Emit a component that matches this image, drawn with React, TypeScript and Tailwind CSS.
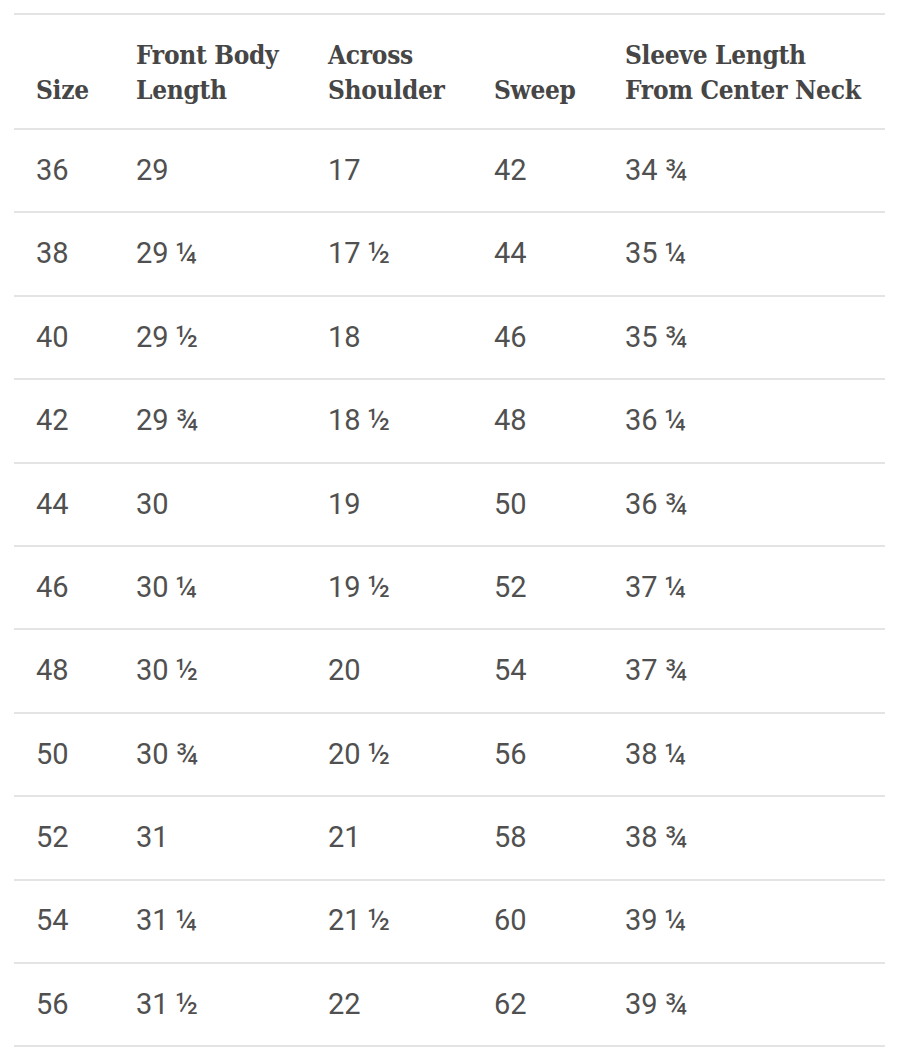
const headers = [
  ["Size"],
  ["Front Body", "Length"],
  ["Across", "Shoulder"],
  ["Sweep"],
  ["Sleeve Length", "From Center Neck"],
];

const rows = [
  ["36", "29", "17", "42", "34 ¾"],
  ["38", "29 ¼", "17 ½", "44", "35 ¼"],
  ["40", "29 ½", "18", "46", "35 ¾"],
  ["42", "29 ¾", "18 ½", "48", "36 ¼"],
  ["44", "30", "19", "50", "36 ¾"],
  ["46", "30 ¼", "19 ½", "52", "37 ¼"],
  ["48", "30 ½", "20", "54", "37 ¾"],
  ["50", "30 ¾", "20 ½", "56", "38 ¼"],
  ["52", "31", "21", "58", "38 ¾"],
  ["54", "31 ¼", "21 ½", "60", "39 ¼"],
  ["56", "31 ½", "22", "62", "39 ¾"],
];

const cols = "grid grid-cols-[100px_192px_166px_131px_1fr]";

export default function App() {
  return (
    <div className="min-h-[1053px] w-[898px] bg-white pt-[13px]">
      <div className="ml-[14px] w-[871px]">
        <div
          className={`${cols} items-end border-y-2 border-[#e4e4e4] pt-[23px] pb-[20px] text-[26px] leading-[35px] font-bold tracking-[-0.3px] text-[#464646]`}
          style={{ fontFamily: '"DejaVu Serif Condensed", "DejaVu Serif", serif', fontStretch: "condensed" }}
        >
          {headers.map((lines, i) => (
            <div key={i} className="pl-[22px]">
              {lines.map((l) => (
                <div key={l} className="whitespace-nowrap">{l}</div>
              ))}
            </div>
          ))}
        </div>
        {rows.map((row, r) => (
          <div
            key={r}
            className={`${cols} h-[83.4px] items-center border-b-2 border-[#e4e4e4] font-['Roboto',sans-serif] text-[29px] text-[#505050]`}
          >
            {row.map((cell, c) => (
              <div key={c} className="pl-[22px] whitespace-nowrap">{cell}</div>
            ))}
          </div>
        ))}
      </div>
    </div>
  );
}
